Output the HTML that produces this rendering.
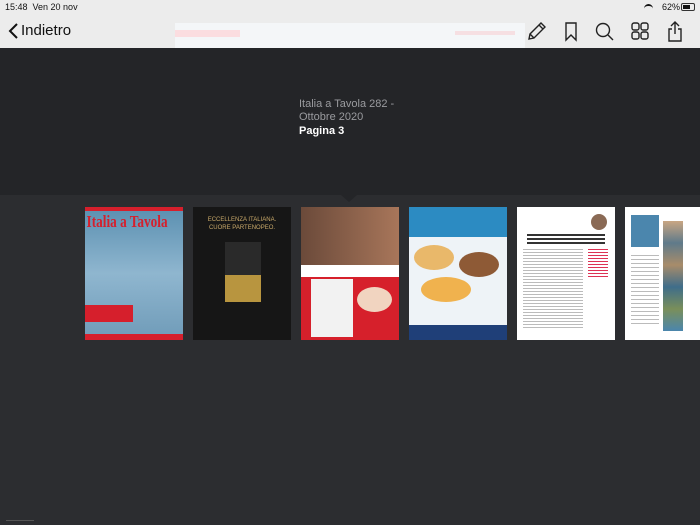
<!DOCTYPE html>
<html><head><meta charset="utf-8"><style>
*{margin:0;padding:0;box-sizing:border-box}
body{width:700px;height:525px;overflow:hidden;background:#2c2d30;font-family:"Liberation Sans",sans-serif;position:relative}
.top{position:absolute;left:0;top:0;width:700px;height:48px;background:#ececec}
.dark{position:absolute;left:0;top:48px;width:700px;height:147px;background:#242528}
.tri{position:absolute;left:341px;top:195px;width:0;height:0;border-left:8px solid transparent;border-right:8px solid transparent;border-top:7px solid #242528}
.pg{position:absolute;top:207px;width:98px;height:133px;overflow:hidden}
.t{position:absolute;font-size:11px;color:#9a9b9f;line-height:13px;white-space:nowrap}
</style></head><body>
<div class="top">
 <div style="position:absolute;left:5px;top:2px;font-size:9px;color:#111">15:48 &nbsp;Ven 20 nov</div>
 <div style="position:absolute;right:20px;top:2px;font-size:9px;color:#111">62%</div>
 <div style="position:absolute;left:644px;top:4px;width:9px;height:7px;border-radius:5px 5px 0 0;border-top:2px solid #111"></div>
 <div style="position:absolute;left:681px;top:3px;width:14px;height:8px;border:1px solid #333;border-radius:2px;padding:1px"><div style="width:7px;height:100%;background:#111"></div></div>
 <div style="position:absolute;left:175px;top:23px;width:350px;height:25px;background:#f4f6f8"><div style="position:absolute;left:0;top:7px;width:65px;height:7px;background:#fbdde0"></div><div style="position:absolute;right:10px;top:8px;width:60px;height:4px;background:#f6dfe2"></div></div>
 <svg style="position:absolute;left:8px;top:22px" width="12" height="18"><path d="M9 2L2 9l7 7" stroke="#111" stroke-width="2" fill="none"/></svg>
 <div style="position:absolute;left:21px;top:22px;font-size:15px;color:#111">Indietro</div>
 <svg style="position:absolute;left:526px;top:20px" width="170" height="22" fill="none" stroke="#222" stroke-width="1.4">
  <path d="M3 19l1-5L15 3l4 4L8 18z M13 5l4 4 M4 14l4 4"/>
  <path d="M40 3h10v17l-5-5-5 5z"/>
  <circle cx="77" cy="10" r="6.5"/><path d="M82 15l5 5"/>
  <rect x="106" y="3" width="7" height="7" rx="2"/><rect x="115" y="3" width="7" height="7" rx="2"/><rect x="106" y="12" width="7" height="7" rx="2"/><rect x="115" y="12" width="7" height="7" rx="2"/>
  <path d="M146 9h-3v12h12V9h-3 M149 14V2 M145 6l4-4 4 4"/>
 </svg>
</div>
<div class="dark">
 <div class="t" style="left:299px;top:50px">Italia a Tavola 282 -<br>Ottobre 2020</div>
 <div class="t" style="left:299px;top:77px;color:#fff;font-weight:bold">Pagina 3</div>
</div>
<div class="tri"></div>

<div class="pg" style="left:85px;background:linear-gradient(#5a8fb0,#8fb6cf 50%,#6f9bb8)">
 <div style="height:4px;background:#d61f2c"></div>
 <div style="color:#d61f2c;font-family:'Liberation Serif',serif;font-weight:bold;font-size:17px;padding:1px 2px;white-space:nowrap;transform:scaleX(0.78);transform-origin:left">Italia a Tavola</div>
 <div style="position:absolute;left:0;top:98px;width:48px;height:17px;background:#d61f2c"></div>
 <div style="position:absolute;left:0;top:127px;width:98px;height:6px;background:#d61f2c"></div>
</div>
<div class="pg" style="left:193px;background:#161616">
 <div style="color:#c9a96a;font-size:6px;text-align:center;margin-top:9px;line-height:8px">ECCELLENZA ITALIANA.<br>CUORE PARTENOPEO.</div>
 <div style="position:absolute;left:32px;top:35px;width:36px;height:60px;background:linear-gradient(#2a2a2a 55%,#b8953f 55%)"></div>
</div>
<div class="pg" style="left:301px;background:#fff">
 <div style="height:58px;background:linear-gradient(90deg,#6b4a3a,#a8765a)"></div>
 <div style="position:absolute;left:0;top:70px;width:98px;height:63px;background:#d6202b"></div>
 <div style="position:absolute;left:10px;top:72px;width:42px;height:58px;background:#f2f2f2"></div>
 <div style="position:absolute;left:56px;top:80px;width:35px;height:25px;border-radius:50%;background:#f1d4c0"></div>
</div>
<div class="pg" style="left:409px;background:#eef3f7">
 <div style="height:30px;background:#2c8bc2"></div>
 <div style="position:absolute;left:5px;top:38px;width:40px;height:25px;border-radius:50%;background:#e9b86a"></div>
 <div style="position:absolute;left:50px;top:45px;width:40px;height:25px;border-radius:50%;background:#8e5a36"></div>
 <div style="position:absolute;left:12px;top:70px;width:50px;height:25px;border-radius:50%;background:#f0b24e"></div>
 <div style="position:absolute;left:0;top:118px;width:98px;height:15px;background:#1f3f78"></div>
</div>
<div class="pg" style="left:517px;background:#fff">
 <div style="position:absolute;left:10px;top:27px;width:78px;height:12px;background:repeating-linear-gradient(#333 0 2px,transparent 2px 4px)"></div>
 <div style="position:absolute;left:74px;top:7px;width:16px;height:16px;border-radius:50%;background:#8a6a55"></div>
 <div style="position:absolute;left:6px;top:42px;width:60px;height:80px;background:repeating-linear-gradient(#bbb 0 1px,transparent 1px 3px)"></div>
 <div style="position:absolute;left:71px;top:42px;width:20px;height:30px;background:repeating-linear-gradient(#d35 0 1px,transparent 1px 3px)"></div>
</div>
<div class="pg" style="left:625px;width:80px;background:#fff">
 <div style="position:absolute;left:6px;top:8px;width:28px;height:32px;background:#4b86ad"></div>
 <div style="position:absolute;left:38px;top:14px;width:20px;height:110px;background:linear-gradient(#c9a683,#5f7a8a,#a88c6a,#3f6d8a,#7a8f5a,#4b86ad)"></div>
 <div style="position:absolute;left:6px;top:48px;width:28px;height:70px;background:repeating-linear-gradient(#bbb 0 1px,transparent 1px 4px)"></div>
</div>
<div style="position:absolute;left:6px;top:520px;width:28px;height:1px;background:#555"></div>
</body></html>
